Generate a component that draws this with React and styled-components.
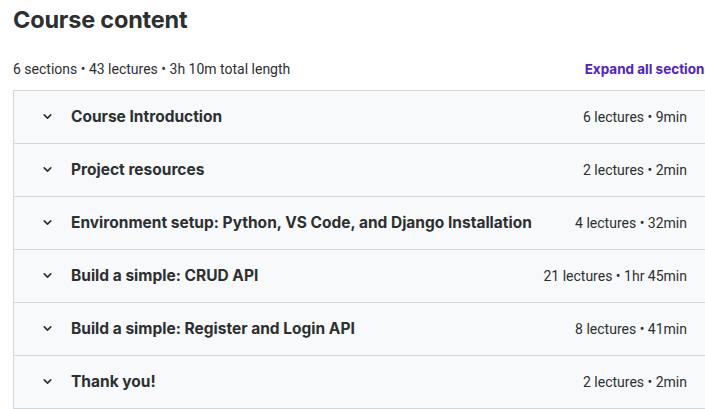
import styled, { createGlobalStyle } from "styled-components";

const GlobalStyle = createGlobalStyle`
  html, body {
    margin: 0;
    padding: 0;
    background: #ffffff;
    overflow: hidden;
  }
  body {
    font-family: Inter, "Noto Sans", "Liberation Sans", sans-serif;
    color: #2d2f31;
  }
`;

const sections = [
  { title: "Course Introduction", meta: "6 lectures • 9min" },
  { title: "Project resources", meta: "2 lectures • 2min" },
  { title: "Environment setup: Python, VS Code, and Django Installation", meta: "4 lectures • 32min" },
  { title: "Build a simple: CRUD API", meta: "21 lectures • 1hr 45min" },
  { title: "Build a simple: Register and Login API", meta: "8 lectures • 41min" },
  { title: "Thank you!", meta: "2 lectures • 2min" },
];

const Chevron = () => (
  <svg width="13" height="13" viewBox="0 0 24 24" fill="none" stroke="#2d2f31" strokeWidth="3" strokeLinecap="round" strokeLinejoin="round">
    <path d="M6 9l6 6 6-6" />
  </svg>
);

const App = () => {
  return (
    <>
      <GlobalStyle />
      <Wrapper>
        <Heading>Course content</Heading>
        <MetaBar>
          <Summary>6 sections • 43 lectures • 3h 10m total length</Summary>
          <ExpandAll>Expand all sections</ExpandAll>
        </MetaBar>
        <Panel>
          {sections.map((s) => (
            <Row key={s.title}>
              <IconBox><Chevron /></IconBox>
              <RowTitle>{s.title}</RowTitle>
              <RowMeta>{s.meta}</RowMeta>
            </Row>
          ))}
        </Panel>
      </Wrapper>
    </>
  );
};

const Wrapper = styled.div`
  width: 699px;
  margin-left: 13px;
`;

const Heading = styled.h2`
  margin: 5px 0 0;
  font-size: 23.5px;
  font-weight: 700;
  line-height: 30px;
  letter-spacing: -0.2px;
`;

const MetaBar = styled.div`
  display: flex;
  justify-content: space-between;
  align-items: center;
  height: 24px;
  margin-top: 22px;
  margin-bottom: 9px;
  font-family: Roboto, "Liberation Sans", sans-serif;
  font-size: 14px;
`;

const Summary = styled.span`
  color: #2d2f31;
`;

const ExpandAll = styled.span`
  font-family: Inter, "Noto Sans", sans-serif;
  font-size: 13.5px;
  color: #5022c3;
  font-weight: 700;
  white-space: nowrap;
`;

const Panel = styled.div`
  border: 1px solid #d1d7dc;
  border-bottom: none;
`;

const Row = styled.div`
  display: flex;
  align-items: center;
  height: 52px;
  padding: 0 24px 1px 27px;
  box-sizing: content-box;
  height: 51px;
  background: #f7f9fa;
  border-bottom: 1px solid #d1d7dc;
`;

const IconBox = styled.span`
  display: flex;
  align-items: center;
  width: 30px;
`;

const RowTitle = styled.span`
  flex: 1;
  font-size: 15.5px;
  font-weight: 700;
  white-space: nowrap;
`;

const RowMeta = styled.span`
  font-family: Roboto, "Liberation Sans", sans-serif;
  font-size: 14px;
  white-space: nowrap;
`;

export default App;
